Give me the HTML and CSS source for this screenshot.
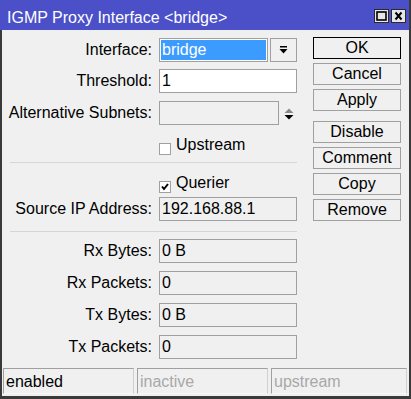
FILE: index.html
```html
<html>
<head>
  <title>IGMP Proxy Interface &lt;bridge&gt;</title>
  <link rel="stylesheet" href="styles.css">
</head>
<body>
  <div class="window">
    <div class="titlebar">
      <span class="title">IGMP Proxy Interface &lt;bridge&gt;</span>
      <div class="win-buttons">
        <span class="win-btn">
          <svg width="11" height="10" viewBox="0 0 11 10"><rect x="1" y="1" width="9" height="8" fill="none" stroke="#000" stroke-width="1.6"/></svg>
        </span>
        <span class="win-btn">
          <svg width="11" height="10" viewBox="0 0 11 10"><path d="M2.5 1.5 L8.5 8.5 M8.5 1.5 L2.5 8.5" stroke="#000" stroke-width="2"/></svg>
        </span>
      </div>
    </div>

    <div class="frame">
      <div class="content">
        <div class="form">
          <div class="row">
            <label class="label">Interface:</label>
            <div class="field selected"><span>bridge</span></div>
            <span class="drop-btn">
              <svg width="9" height="8" viewBox="0 0 9 8"><rect x="1" y="0" width="7" height="1.5" fill="#000"/><path d="M0.5 3 L8.5 3 L4.5 7.5 Z" fill="#000"/></svg>
            </span>
          </div>
          <div class="row gap7">
            <label class="label">Threshold:</label>
            <div class="field white wide">1</div>
          </div>
          <div class="row">
            <label class="label">Alternative Subnets:</label>
            <div class="field disabled short"></div>
            <span class="spinner">
              <svg width="10" height="13" viewBox="0 0 10 13"><path d="M0.5 5 L9.5 5 L5 0.5 Z" fill="#8a8a8a"/><path d="M0.5 7 L9.5 7 L5 11.5 Z" fill="#000"/></svg>
            </span>
          </div>
          <div class="row check-row">
            <span class="label"></span>
            <span class="checkbox"></span>
            <span class="check-text">Upstream</span>
          </div>

          <div class="separator first"></div>

          <div class="row check-row querier">
            <span class="label"></span>
            <span class="checkbox">
              <svg width="10" height="10" viewBox="0 0 10 10"><path d="M2 4.5 L4 7 L8 2" fill="none" stroke="#000" stroke-width="2"/></svg>
            </span>
            <span class="check-text">Querier</span>
          </div>
          <div class="row gap4">
            <label class="label">Source IP Address:</label>
            <div class="field disabled wide">192.168.88.1</div>
          </div>

          <div class="separator second"></div>

          <div class="row gap7">
            <label class="label">Rx Bytes:</label>
            <div class="field disabled wide">0 B</div>
          </div>
          <div class="row">
            <label class="label">Rx Packets:</label>
            <div class="field disabled wide">0</div>
          </div>
          <div class="row">
            <label class="label">Tx Bytes:</label>
            <div class="field disabled wide">0 B</div>
          </div>
          <div class="row">
            <label class="label">Tx Packets:</label>
            <div class="field disabled wide">0</div>
          </div>
        </div>

        <div class="actions">
          <button class="btn default">OK</button>
          <button class="btn">Cancel</button>
          <button class="btn">Apply</button>
          <button class="btn group">Disable</button>
          <button class="btn">Comment</button>
          <button class="btn">Copy</button>
          <button class="btn">Remove</button>
        </div>
      </div>

      <div class="statusbar">
        <div class="status-cell">enabled</div>
        <div class="status-cell off">inactive</div>
        <div class="status-cell off last">upstream</div>
      </div>
    </div>
  </div>
</body>
</html>
```

FILE: styles.css
```css
body {
  margin: 0;
  padding: 0;
  font-family: "Liberation Sans", Arial, sans-serif;
  font-size: 16px;
  color: #000;
  background: #f0f0f0;
}

.window {
  width: 411px;
  height: 399px;
  display: flex;
  flex-direction: column;
}

/* Title bar */
.titlebar {
  height: 30px;
  background: #4b50c9;
  display: flex;
  align-items: center;
  padding: 0 5px 0 7px;
  box-sizing: border-box;
  border-right: 2px solid #3a3a3a;
}

.title {
  color: #ffffff;
  font-size: 16px;
  flex: 1;
  padding-top: 5px;
}

.win-buttons {
  display: flex;
  gap: 2px;
  padding-top: 2px;
  margin-right: -2px;
}

.win-btn {
  width: 15px;
  height: 14px;
  box-sizing: border-box;
  background: #e6e6e6;
  border: 1px solid #2a2a2a;
  display: flex;
  align-items: center;
  justify-content: center;
}

/* Frame */
.frame {
  flex: 1;
  display: flex;
  flex-direction: column;
  background: #f0f0f0;
  border-left: 2px solid #3a3a3a;
  border-right: 2px solid #3a3a3a;
  border-bottom: 3px solid #3a3a3a;
}

.content {
  flex: 1;
  display: flex;
}

.form {
  padding-top: 8px;
  width: 295px;
}

.row {
  display: flex;
  align-items: center;
  height: 24px;
  margin-top: 8px;
}

.row:first-child {
  margin-top: 0;
}

.row.gap7 {
  margin-top: 7px;
}

.row.gap4 {
  margin-top: 4px;
}

.label {
  width: 150px;
  text-align: right;
  margin-right: 7px;
  flex-shrink: 0;
}

.field {
  height: 24px;
  box-sizing: border-box;
  border: 1px solid #a0a0a0;
  padding: 0 2px;
  line-height: 22px;
  white-space: nowrap;
}

.field.wide {
  width: 138px;
}

.field.white {
  background: #ffffff;
}

.field.disabled {
  background: #f0f0f0;
}

.field.short {
  width: 120px;
}

.field.selected {
  width: 109px;
  background: #ffffff;
  padding: 1px;
}

.field.selected span {
  display: block;
  height: 20px;
  line-height: 20px;
  background: #3c9bff;
  color: #ffffff;
  padding-left: 1px;
}

.drop-btn {
  width: 27px;
  height: 24px;
  box-sizing: border-box;
  border: 1px solid #a0a0a0;
  margin-left: 2px;
  display: flex;
  align-items: center;
  justify-content: center;
}

.spinner {
  margin-left: 5px;
  display: flex;
  padding-top: 2px;
}

/* Check boxes */
.check-row {
  height: 24px;
}

.check-row.querier {
  margin-top: 10px;
  height: 20px;
}

.checkbox {
  width: 12px;
  height: 12px;
  box-sizing: border-box;
  border: 1px solid #a0a0a0;
  background: #ffffff;
  margin-top: 7px;
  display: flex;
  align-items: center;
  justify-content: center;
}

.check-text {
  margin-left: 5px;
}

.separator {
  height: 1px;
  background: #d6d6d6;
  margin-left: 8px;
  width: 287px;
}

.separator.first {
  margin-top: 5px;
}

.separator.second {
  margin-top: 10px;
}

/* Buttons */
.actions {
  margin-left: 16px;
  padding-top: 7px;
  display: flex;
  flex-direction: column;
  gap: 4px;
}

.btn {
  width: 88px;
  height: 22px;
  box-sizing: border-box;
  border: 1px solid #a0a0a0;
  background: #f0f0f0;
  font-family: "Liberation Sans", Arial, sans-serif;
  font-size: 16px;
  color: #000;
  padding: 0;
  line-height: 20px;
}

.btn.default {
  border-color: #000;
}

.btn.group {
  margin-top: 6px;
}

/* Status bar */
.statusbar {
  display: flex;
  gap: 3px;
  padding: 0 2px 2px 1px;
}

.status-cell {
  width: 131px;
  height: 26px;
  box-sizing: border-box;
  border-top: 1px solid #a0a0a0;
  border-left: 1px solid #a0a0a0;
  border-right: 1px solid #d0d0d0;
  border-bottom: 1px solid #f8f8f8;
  padding-left: 2px;
  line-height: 25px;
}

.status-cell.off {
  color: #a8a8a8;
}

.status-cell.last {
  flex: 1;
}
```
